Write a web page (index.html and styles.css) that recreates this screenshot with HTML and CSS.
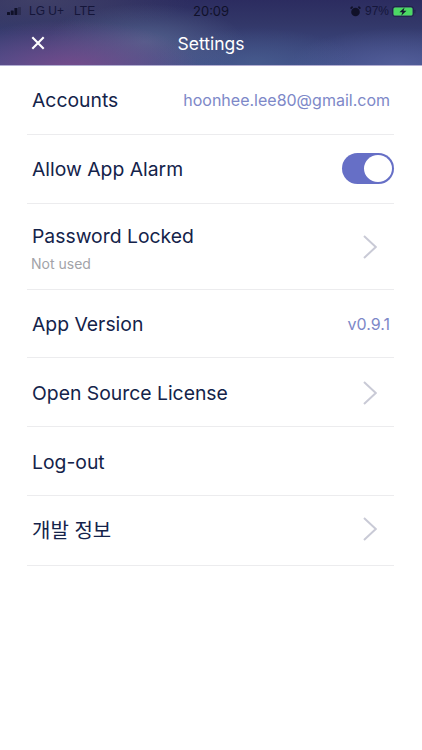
FILE: index.html
```html
<!DOCTYPE html>
<html lang="en">
<head>
<meta charset="utf-8">
<title>Settings</title>
<link rel="stylesheet" href="styles.css">
</head>
<body>
<header class="header">
  <div class="status">
    <div class="status-left">
      <svg class="signal" width="14" height="8" viewBox="0 0 14 8"><rect x="0" y="5" width="3" height="3" rx=".6"/><rect x="3.7" y="3.4" width="3" height="4.6" rx=".6"/><rect x="7.4" y="1" width="3" height="7" rx=".6"/><rect x="11" y="0" width="3" height="8" rx=".6" opacity=".35"/></svg>
      <span class="carrier">LG U+</span><span class="carrier lte">LTE</span>
    </div>
    <span class="clock">20:09</span>
    <div class="status-right">
      <svg class="alarm" width="11" height="11" viewBox="0 0 11 11"><circle cx="5.5" cy="6" r="4.3"/><path d="M0.6 2.6 2.6 .7M10.4 2.6 8.4 .7" stroke="#101128" stroke-width="1.6" fill="none"/></svg>
      <span class="carrier">97%</span>
      <svg class="battery" width="24" height="11" viewBox="0 0 24 11"><rect x=".5" y=".5" width="21" height="10" rx="2.4" fill="none" stroke="#14152f" stroke-opacity=".45"/><rect x="1.5" y="1.5" width="19" height="8" rx="1.5" fill="#4cd964"/><path d="M12.6 1.4 7.4 6.2h3l-1.2 3.5 5.3-4.9h-3z" fill="#14152f"/><rect x="22.4" y="3.8" width="1" height="3.4" rx=".5" fill="#14152f" fill-opacity=".5"/></svg>
    </div>
  </div>
  <div class="navbar">
    <svg class="close" width="16" height="16" viewBox="0 0 16 16"><path d="M2.3 2.3 13.7 13.7M13.7 2.3 2.3 13.7" stroke="#fff" stroke-width="2.1" fill="none"/></svg>
    <h1 class="title">Settings</h1>
  </div>
</header>
<main class="list">
  <div class="row">
    <span class="label">Accounts</span>
    <span class="value">hoonhee.lee80@gmail.com</span>
  </div>
  <div class="row">
    <span class="label">Allow App Alarm</span>
    <span class="toggle"><span class="knob"></span></span>
  </div>
  <div class="row row-tall">
    <div class="stack">
      <span class="label">Password Locked</span>
      <span class="sub">Not used</span>
    </div>
    <svg class="chevron" width="14" height="24" viewBox="0 0 14 24"><path d="M1 1 12.8 12 1 23" fill="none" stroke="#c9cad6" stroke-width="2"/></svg>
  </div>
  <div class="row row-short">
    <span class="label">App Version</span>
    <span class="value">v0.9.1</span>
  </div>
  <div class="row row-low">
    <span class="label">Open Source License</span>
    <svg class="chevron" width="14" height="24" viewBox="0 0 14 24"><path d="M1 1 12.8 12 1 23" fill="none" stroke="#c9cad6" stroke-width="2"/></svg>
  </div>
  <div class="row row-low">
    <span class="label">Log-out</span>
  </div>
  <div class="row row-last">
    <span class="label label-ko">개발 정보</span>
    <svg class="chevron" width="14" height="24" viewBox="0 0 14 24"><path d="M1 1 12.8 12 1 23" fill="none" stroke="#c9cad6" stroke-width="2"/></svg>
  </div>
</main>
</body>
</html>
```
FILE: styles.css
```css
* { box-sizing: border-box; }
html, body { margin: 0; padding: 0; }
body {
  width: 422px;
  height: 750px;
  background: #fff;
  overflow: hidden;
  font-family: Inter, "Noto Sans CJK KR", sans-serif;
  color: #14234a;
}
.header {
  height: 66px;
  color: #14152f;
  border-bottom: 1px solid #b2aed2;
  background:
    radial-gradient(ellipse 130px 50px at 70px 70px, rgba(125, 75, 140, .9), rgba(125, 75, 140, 0)),
    radial-gradient(ellipse 100px 38px at 145px 42px, rgba(92, 108, 148, .7), rgba(92, 108, 148, 0)),
    radial-gradient(ellipse 100px 34px at 255px 62px, rgba(75, 100, 145, .55), rgba(75, 100, 145, 0)),
    radial-gradient(ellipse 110px 36px at 400px 64px, rgba(90, 100, 160, .7), rgba(90, 100, 160, 0)),
    radial-gradient(ellipse 150px 34px at 40px 0, rgba(70, 70, 105, .75), rgba(70, 70, 105, 0)),
    linear-gradient(180deg, #2c2c60 0%, #323768 35%, #3f4d88 100%);
}
.status {
  height: 22px;
  display: flex;
  justify-content: space-between;
  align-items: center;
  padding: 0 6px 0 7px;
  position: relative;
}
.status-left, .status-right { display: flex; align-items: center; }
.signal { fill: #101128; margin-right: 8px; }
.carrier { font-family: "Liberation Sans", sans-serif; font-size: 12px; color: #15163a; }
.lte { margin-left: 10px; }
.clock { position: absolute; left: 193px; font-size: 13px; color: #10112a; }
.alarm { fill: #101128; margin-right: 4px; }
.battery { margin-left: 3px; }
.navbar {
  height: 43px;
  display: flex;
  align-items: center;
  justify-content: center;
  position: relative;
}
.close { position: absolute; left: 30px; top: 13px; }
.title {
  margin: 0;
  font-size: 17.5px;
  font-weight: 400;
  color: #fff;
}
.list { padding: 0 28px 0 27px; }
.row {
  height: 69px;
  display: flex;
  justify-content: space-between;
  align-items: center;
  border-bottom: 1px solid #ececee;
  padding: 0 4px 0 5px;
}
.row-tall { height: 86px; }
.row-short { height: 68px; }
.row-low { padding-top: 2px; }
.row-last { height: 70px; padding-bottom: 3px; }
.stack { display: flex; flex-direction: column; padding-top: 2px; }
.label { font-size: 19.35px; color: #14234a; }
.label-ko { font-size: 20px; }
.sub { font-size: 14px; color: #a2a3a8; margin-top: 7px; margin-left: -1px; }
.value { font-size: 16px; color: #7d88c8; }
.toggle {
  width: 52px;
  height: 31px;
  margin: -1px -4px 0 0;
  border-radius: 16px;
  background: #666fc6;
  display: flex;
  justify-content: flex-end;
  align-items: center;
  padding-right: 2px;
}
.knob {
  width: 28px;
  height: 27px;
  border-radius: 50%;
  background: #fff;
}
.chevron { margin-right: 13px; }
```
